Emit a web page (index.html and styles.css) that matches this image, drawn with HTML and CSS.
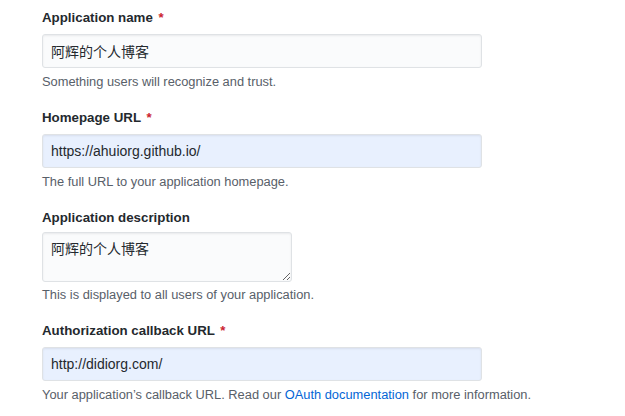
FILE: index.html
```html
<!DOCTYPE html>
<html lang="en">
<head>
<meta charset="utf-8">
<title>Register a new OAuth application</title>
<link rel="stylesheet" href="styles.css">
</head>
<body>
<form class="form">
  <dl class="group">
    <dt class="label">Application name <span class="req">*</span></dt>
    <dd class="field"><input class="control" type="text" value="阿辉的个人博客"></dd>
    <dd class="note">Something users will recognize and trust.</dd>
  </dl>
  <dl class="group">
    <dt class="label">Homepage URL <span class="req">*</span></dt>
    <dd class="field"><input class="control autofill" type="text" value="https://ahuiorg.github.io/"></dd>
    <dd class="note">The full URL to your application homepage.</dd>
  </dl>
  <dl class="group">
    <dt class="label label-area">Application description</dt>
    <dd class="field"><textarea class="control area">阿辉的个人博客</textarea></dd>
    <dd class="note note-area">This is displayed to all users of your application.</dd>
  </dl>
  <dl class="group">
    <dt class="label">Authorization callback URL <span class="req">*</span></dt>
    <dd class="field"><input class="control autofill" type="text" value="http://didiorg.com/"></dd>
    <dd class="note">Your application’s callback URL. Read our <a class="link" href="#">OAuth documentation</a> for more information.</dd>
  </dl>
</form>
</body>
</html>
```
FILE: styles.css
```css
html, body {
  margin: 0;
  padding: 0;
  background: #ffffff;
}
body {
  font-family: "Liberation Sans", Arial, "Noto Sans CJK SC", sans-serif;
  color: #24292e;
}
.form {
  padding: 8px 0 0 42px;
}
.group {
  margin: 0 0 17px 0;
  display: flex;
  flex-direction: column;
}
.label {
  font-size: 13.3px;
  line-height: 20px;
  font-weight: 700;
  color: #24292e;
  margin: 0 0 6px 0;
}
.label-area {
  margin-bottom: 4px;
}
.req {
  color: #cb2431;
  margin-left: 2px;
}
.field {
  margin: 0;
  display: flex;
}
.control {
  box-sizing: border-box;
  width: 440px;
  height: 34px;
  padding: 6px 8px;
  font-family: "Liberation Sans", Arial, "Noto Sans CJK SC", sans-serif;
  font-size: 14px;
  line-height: 20px;
  color: #24292e;
  background: #fafbfc;
  border: 1px solid #dfe2e5;
  border-radius: 3px;
  box-shadow: inset 0 1px 2px rgba(27, 31, 35, 0.075);
  outline: none;
}
.autofill {
  background: #e8f0fe;
}
.area {
  width: 250px;
  height: 50px;
  resize: vertical;
}
.note {
  margin: 5px 0 0 0;
  font-size: 12.85px;
  line-height: 18px;
  color: #586069;
}
.note-area {
  margin-top: 4px;
}
.link {
  color: #0366d6;
  text-decoration: none;
}
```
